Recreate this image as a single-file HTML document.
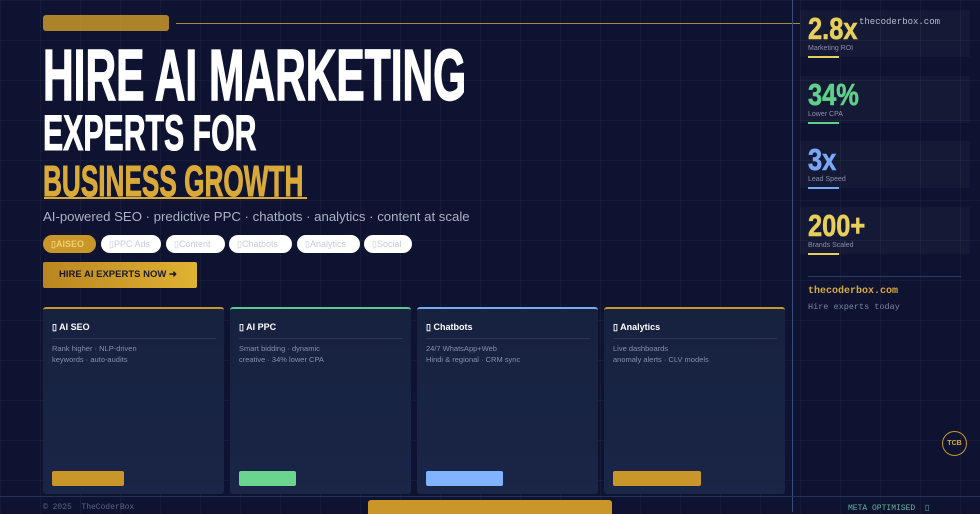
<!DOCTYPE html>
<html><head><meta charset="utf-8"><style>
*{margin:0;padding:0;box-sizing:border-box}
body{width:980px;height:512px;overflow:hidden;background:#0d1330;font-family:"Liberation Sans",sans-serif;position:relative;
background-image:linear-gradient(rgba(255,255,255,0.035) 1px,transparent 1px),linear-gradient(90deg,rgba(255,255,255,0.035) 1px,transparent 1px);background-size:40px 40px;}
.a{position:absolute}
.nar{font-family:"Liberation Sans Narrow","Liberation Sans",sans-serif;font-weight:bold;white-space:nowrap;transform-origin:0 0}
.chip{position:absolute;top:235px;height:18px;border-radius:9px;background:#fff;color:#c8cbd6;font-size:9px;line-height:18px;padding:0 8px;white-space:nowrap}
.card{position:absolute;top:307px;width:181px;height:187px;background:linear-gradient(#17223f,#1a2547);border-radius:3px}
.card .t{position:absolute;left:9px;top:13px;color:#fff;font-size:9px;font-weight:bold}
.card .hr{position:absolute;left:9px;right:8px;top:29px;height:1px;background:#2a3556}
.card .d{position:absolute;left:9px;top:35px;color:#8690ab;font-size:7.5px;line-height:10.5px}
.card .b{position:absolute;left:9px;top:162px;height:15px;border-radius:2px}
.stat{position:absolute;left:800px;width:170px;height:47px;background:rgba(255,255,255,0.03)}
.stat .n{position:absolute;left:8px;top:1px;font-size:31px;transform:scaleX(0.82);-webkit-text-stroke:0.6px currentColor}
.stat .l{position:absolute;left:8px;top:35px;font-size:7px;color:#8890aa}
.stat .u{position:absolute;left:8px;top:46px;width:31px;height:2px}
.mono{font-family:"Liberation Mono",monospace}
</style></head><body>
<div class="a" style="left:43px;top:15px;width:126px;height:16px;background:#c9962a;border-radius:3px;opacity:.85"></div>
<div class="a" style="left:176px;top:23px;width:624px;height:1px;background:#a88a3a"></div>
<div class="a" style="left:792px;top:0;width:1px;height:512px;background:#3b4a80"></div>
<div class="a" style="left:0;top:496px;width:980px;height:1px;background:#26305a"></div>

<div class="a nar" style="left:43px;top:40px;font-size:72px;line-height:72px;color:#fff;transform:scaleX(0.59);-webkit-text-stroke:1.5px #fff">HIRE AI MARKETING</div>
<div class="a nar" style="left:43px;top:108px;font-size:50px;line-height:50px;color:#fff;transform:scaleX(0.605);-webkit-text-stroke:1px #fff">EXPERTS FOR</div>
<div class="a nar" style="left:43px;top:160px;font-size:44px;line-height:44px;color:#d9a93a;transform:scaleX(0.595);-webkit-text-stroke:1px #d9a93a">BUSINESS GROWTH</div>
<div class="a" style="left:44px;top:197px;width:263px;height:2px;background:#d9a93a"></div>
<div class="a" style="left:43px;top:209px;font-size:13.2px;color:#aab2c8;white-space:nowrap">AI-powered SEO · predictive PPC · chatbots · analytics · content at scale</div>

<div class="chip" style="left:43px;width:53px;background:#c9962a;color:#f3d070;font-weight:bold">▯AISEO</div>
<div class="chip" style="left:101px;width:60px">▯PPC Ads</div>
<div class="chip" style="left:166px;width:59px">▯Content</div>
<div class="chip" style="left:229px;width:63px">▯Chatbots</div>
<div class="chip" style="left:297px;width:63px">▯Analytics</div>
<div class="chip" style="left:364px;width:48px">▯Social</div>

<div class="a" style="left:43px;top:262px;width:154px;height:26px;background:linear-gradient(90deg,#b9861f,#e0b232);border-radius:2px;color:#1a1a2a;font-size:9.5px;font-weight:bold;line-height:26px;padding-left:16px">HIRE AI EXPERTS NOW ➜</div>

<div class="card" style="left:43px;border-top:2px solid #c9962a"><div class="t">▯ AI SEO</div><div class="hr"></div><div class="d">Rank higher · NLP-driven<br>keywords · auto-audits</div><div class="b" style="width:72px;background:#c9962a"></div></div>
<div class="card" style="left:230px;border-top:2px solid #5cc98a"><div class="t">▯ AI PPC</div><div class="hr"></div><div class="d">Smart bidding · dynamic<br>creative · 34% lower CPA</div><div class="b" style="width:57px;background:#6bd48e"></div></div>
<div class="card" style="left:417px;border-top:2px solid #78aaf0"><div class="t">▯ Chatbots</div><div class="hr"></div><div class="d">24/7 WhatsApp+Web<br>Hindi &amp; regional · CRM sync</div><div class="b" style="width:77px;background:#80b4ff"></div></div>
<div class="card" style="left:604px;border-top:2px solid #c9962a"><div class="t">▯ Analytics</div><div class="hr"></div><div class="d">Live dashboards<br>anomaly alerts · CLV models</div><div class="b" style="width:88px;background:#c9962a"></div></div>

<div class="stat" style="top:10px"><div class="n nar" style="color:#e8cf5a">2.8x</div><div class="l">Marketing ROI</div><div class="u" style="background:#e8cf5a"></div></div>
<div class="a mono" style="left:859px;top:17px;font-size:9px;color:#b8bccb">thecoderbox.com</div>
<div class="stat" style="top:76px"><div class="n nar" style="color:#5fd08a">34%</div><div class="l">Lower CPA</div><div class="u" style="background:#5fd08a"></div></div>
<div class="stat" style="top:141px"><div class="n nar" style="color:#7aa8f5">3x</div><div class="l">Lead Speed</div><div class="u" style="background:#7aa8f5"></div></div>
<div class="stat" style="top:207px"><div class="n nar" style="color:#e8cf5a">200+</div><div class="l">Brands Scaled</div><div class="u" style="background:#e8cf5a"></div></div>
<div class="a" style="left:808px;top:276px;width:153px;height:1px;background:#2e3a66"></div>
<div class="a mono" style="left:808px;top:286px;font-size:10px;font-weight:bold;color:#d9a93a">thecoderbox.com</div>
<div class="a mono" style="left:808px;top:302px;font-size:8.5px;color:#7c849e">Hire experts today</div>
<div class="a" style="left:942px;top:431px;width:25px;height:25px;border:1px solid #c9962a;border-radius:50%;color:#d9a93a;font-size:7px;font-weight:bold;text-align:center;line-height:23px">TCB</div>

<div class="a mono" style="left:43px;top:503px;font-size:8px;color:#5a6488;white-space:pre">© 2025  TheCoderBox</div>
<div class="a" style="left:368px;top:500px;width:244px;height:14px;background:#c9962a;border-radius:3px 3px 0 0"></div>
<div class="a mono" style="left:848px;top:503px;font-size:8px;color:#5fb89a;white-space:pre">META OPTIMISED  ▯</div>
</body></html>
